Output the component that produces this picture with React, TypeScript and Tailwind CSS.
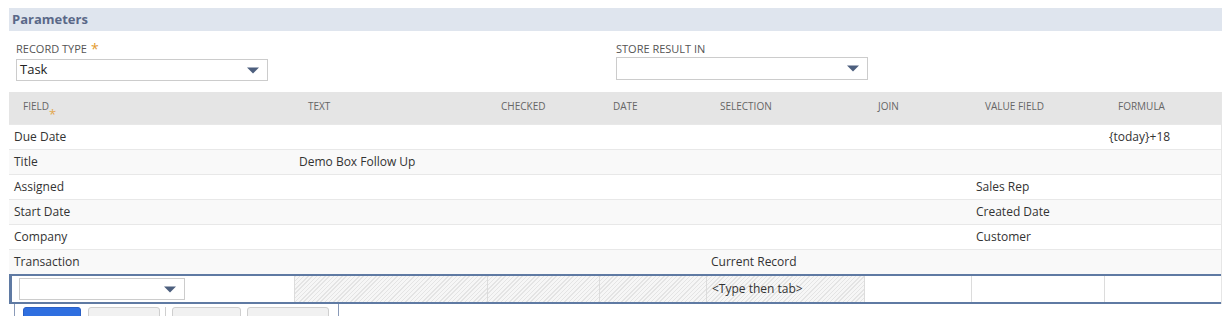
import React from "react";

const columns = ["Field", "Text", "Checked", "Date", "Selection", "Join", "Value Field", "Formula"];

const rows = [
  ["Due Date", "", "", "", "", "", "", "{today}+18"],
  ["Title", "Demo Box Follow Up", "", "", "", "", "", ""],
  ["Assigned", "", "", "", "", "", "Sales Rep", ""],
  ["Start Date", "", "", "", "", "", "Created Date", ""],
  ["Company", "", "", "", "", "", "Customer", ""],
  ["Transaction", "", "", "", "Current Record", "", "", ""],
];

const grid = "grid grid-cols-[285px_193px_112px_107px_158px_107px_133px_1fr]";
const editGrid = "grid grid-cols-[283px_193px_112px_107px_158px_107px_133px_1fr]";
const hatch =
  "bg-[repeating-linear-gradient(135deg,#e4e4e4_0px,#e4e4e4_1px,#f6f6f6_1px,#f6f6f6_3px)]";

function Arrow() {
  return (
    <svg width="12" height="7" viewBox="0 0 12 7" className="shrink-0">
      <path d="M0 0.5 H12 L6 6.5 Z" fill="#4d5f7e" />
    </svg>
  );
}

function Select({ value, className }: { value?: string; className: string }) {
  return (
    <div
      className={`flex items-center justify-between border border-[#cccccc] bg-white pl-[3px] pr-[8px] ${className}`}
    >
      <span className="text-[13px] text-[#222]">{value}</span>
      <Arrow />
    </div>
  );
}

export default function App() {
  return (
    <div className="font-['Open_Sans',sans-serif] bg-white h-[316px] overflow-hidden pt-2 pl-[9px] pr-[3px]">
      {/* section header */}
      <div className="h-[23px] bg-[#dfe5ee] flex items-center pl-[3px]">
        <span className="text-[13px] font-bold text-[#5a6888]">Parameters</span>
      </div>

      {/* top fields */}
      <div className="flex pl-[7px] h-[61px]">
        <div className="w-[600px] pt-[10px]">
          <div className="text-[11px] text-[#555] leading-[16px] flex items-center gap-1">
            RECORD TYPE <span className="text-[#e39b2f] text-[14px] leading-[14px]">*</span>
          </div>
          <Select value="Task" className="w-[252px] h-[22px] mt-[2px]" />
        </div>
        <div className="pt-[10px]">
          <div className="text-[11px] text-[#555] leading-[16px]">STORE RESULT IN</div>
          <Select className="w-[252px] h-[23px]" />
        </div>
      </div>

      {/* table */}
      <div className="border-r border-[#e6e6e6]">
        <div className={`${grid} h-[32px] bg-[#e5e5e5]`}>
          {columns.map((c, i) => (
            <div key={c} className="pl-[14px] pt-[7px] text-[10px] text-[#666] uppercase relative">
              {c}
              {i === 0 && (
                <span className="absolute left-[40px] top-[16px] text-[#e3a850] text-[13px] leading-[13px]">*</span>
              )}
            </div>
          ))}
        </div>
        {rows.map((r, ri) => (
          <div
            key={ri}
            className={`${grid} h-[25px] border-t border-[#e8e8e8] ${ri % 2 === 1 ? "bg-[#f9f9f9]" : "bg-white"}`}
          >
            {r.map((v, ci) => (
              <div key={ci} className="pl-[5px] flex items-center text-[12px] text-[#333]">
                {v}
              </div>
            ))}
          </div>
        ))}

        {/* edit row */}
        <div className={`${editGrid} h-[30px] border-y-2 border-[#5f7aa3] border-l-[3px] border-l-[#5f7aa3] bg-white`}>
          <div className="pl-[7px] flex items-center border-r border-[#dcdcdc]">
            <Select className="w-[166px] h-[22px]" />
          </div>
          <div className={`${hatch} border-r border-[#dcdcdc]`} />
          <div className={`${hatch} border-r border-[#dcdcdc]`} />
          <div className={`${hatch} border-r border-[#dcdcdc]`} />
          <div className={`${hatch} border-r border-[#dcdcdc] flex items-center pl-[5px] text-[12px] text-[#333]`}>
            &lt;Type then tab&gt;
          </div>
          <div className="border-r border-[#dcdcdc]" />
          <div className="border-r border-[#dcdcdc]" />
          <div />
        </div>
      </div>

      {/* buttons */}
      <div className="ml-[5px] w-[325px] h-[20px] border-l border-r border-[#8a9ab8] flex items-start pl-[8px] pt-[3px]">
        <div className="w-[58px] h-[12px] rounded-t-[3px] bg-[#2f6fe0] border border-[#2a5fc4]" />
        <div className="w-[72px] h-[12px] rounded-t-[3px] bg-[#f1f1f1] border border-[#cfcfcf] ml-[7px]" />
        <div className="w-px h-[12px] bg-[#cfcfcf] ml-[5px]" />
        <div className="w-[69px] h-[12px] rounded-t-[3px] bg-[#f1f1f1] border border-[#cfcfcf] ml-[6px]" />
        <div className="w-[82px] h-[12px] rounded-t-[3px] bg-[#f1f1f1] border border-[#cfcfcf] ml-[6px]" />
      </div>
    </div>
  );
}
